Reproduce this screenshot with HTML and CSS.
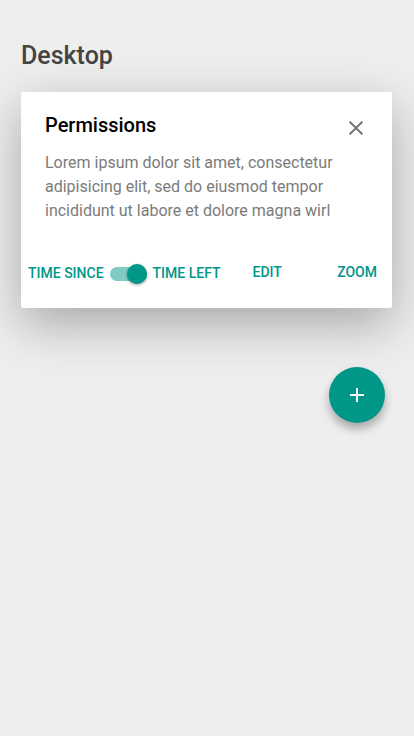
FILE: index.html
```
<!DOCTYPE html>
<html lang="en">
<head>
  <meta charset="utf-8">
  <meta name="viewport" content="width=device-width, initial-scale=1">
  <title>Desktop</title>
  <link rel="stylesheet" href="styles.css">
</head>
<body>
  <main class="page">
    <h1 class="page-title">Desktop</h1>
    <section class="card">
      <header class="card-header">
        <h2 class="card-title">Permissions</h2>
        <button class="close" type="button" aria-label="Close">
          <svg width="24" height="24" viewBox="0 0 24 24" fill="currentColor" aria-hidden="true"><path d="M19 6.41L17.59 5 12 10.59 6.41 5 5 6.41 10.59 12 5 17.59 6.41 19 12 13.41 17.59 19 19 17.59 13.41 12z"/></svg>
        </button>
      </header>
      <p class="card-text">Lorem ipsum dolor sit amet, consectetur adipisicing elit, sed do eiusmod tempor incididunt ut labore et dolore magna wirl</p>
      <div class="card-actions">
        <label class="switch">
          <span>TIME SINCE</span>
          <input class="switch-input" type="checkbox" checked>
          <span>TIME LEFT</span>
        </label>
        <button class="action" type="button">EDIT</button>
        <button class="action action-end" type="button">ZOOM</button>
      </div>
    </section>
    <button class="fab" type="button" aria-label="Add">
      <svg width="24" height="24" viewBox="0 0 24 24" fill="currentColor" aria-hidden="true"><path d="M19 13h-6v6h-2v-6H5v-2h6V5h2v6h6v2z"/></svg>
    </button>
  </main>
</body>
</html>
```
FILE: styles.css
```
* {
  box-sizing: border-box;
}

body {
  margin: 0;
  background: #eee;
  color: #000;
  font-family: Roboto, "Liberation Sans", sans-serif;
}

button {
  padding: 0;
  border: 0;
  background: none;
  font: inherit;
  cursor: pointer;
}

svg {
  display: block;
}

.page {
  display: flex;
  flex-direction: column;
  padding: 40px 22px 40px 21px;
}

.page-title {
  margin: 0 0 20px;
  color: #444;
  font-size: 25px;
  font-weight: 500;
  line-height: 32px;
}

.card {
  border-radius: 2px;
  background: #fff;
  box-shadow: 0 16px 50px rgba(0, 0, 0, 0.3);
}

.card-header {
  display: flex;
  justify-content: space-between;
  padding: 20px 24px 0;
}

.card-title {
  margin: 0;
  font-size: 20px;
  font-weight: 500;
  line-height: 26px;
}

.close {
  margin-top: 4px;
  color: #757575;
}

.card-text {
  margin: 0;
  padding: 11px 24px 0;
  color: #7b7b7b;
  font-size: 16px;
  line-height: 24px;
}

.card-actions {
  display: flex;
  align-items: flex-start;
  padding: 38px 15px 23px 7px;
  color: #009688;
  font-size: 14px;
  font-weight: 500;
  line-height: 22px;
}

.switch {
  display: flex;
  align-items: center;
  gap: 6px;
  height: 24px;
  cursor: pointer;
}

.switch-input {
  display: flex;
  align-items: center;
  justify-content: flex-end;
  width: 37px;
  height: 14px;
  margin: 2px 0 0;
  border-radius: 7px;
  appearance: none;
  background: #80cbc4;
}

.switch-input::before {
  content: "";
  flex: none;
  width: 20px;
  height: 20px;
  border-radius: 50%;
  background: #009688;
  box-shadow: 0 1px 3px rgba(0, 0, 0, 0.4);
}

.switch-input:not(:checked) {
  justify-content: flex-start;
}

.action {
  margin-left: 32px;
  color: inherit;
}

.action-end {
  margin-left: auto;
}

.fab {
  display: flex;
  align-items: center;
  justify-content: center;
  align-self: flex-end;
  width: 56px;
  height: 56px;
  margin: 59px 7px 0 0;
  border-radius: 50%;
  background: #009688;
  color: #fff;
  box-shadow: 0 6px 10px rgba(0, 0, 0, 0.3);
}
```
